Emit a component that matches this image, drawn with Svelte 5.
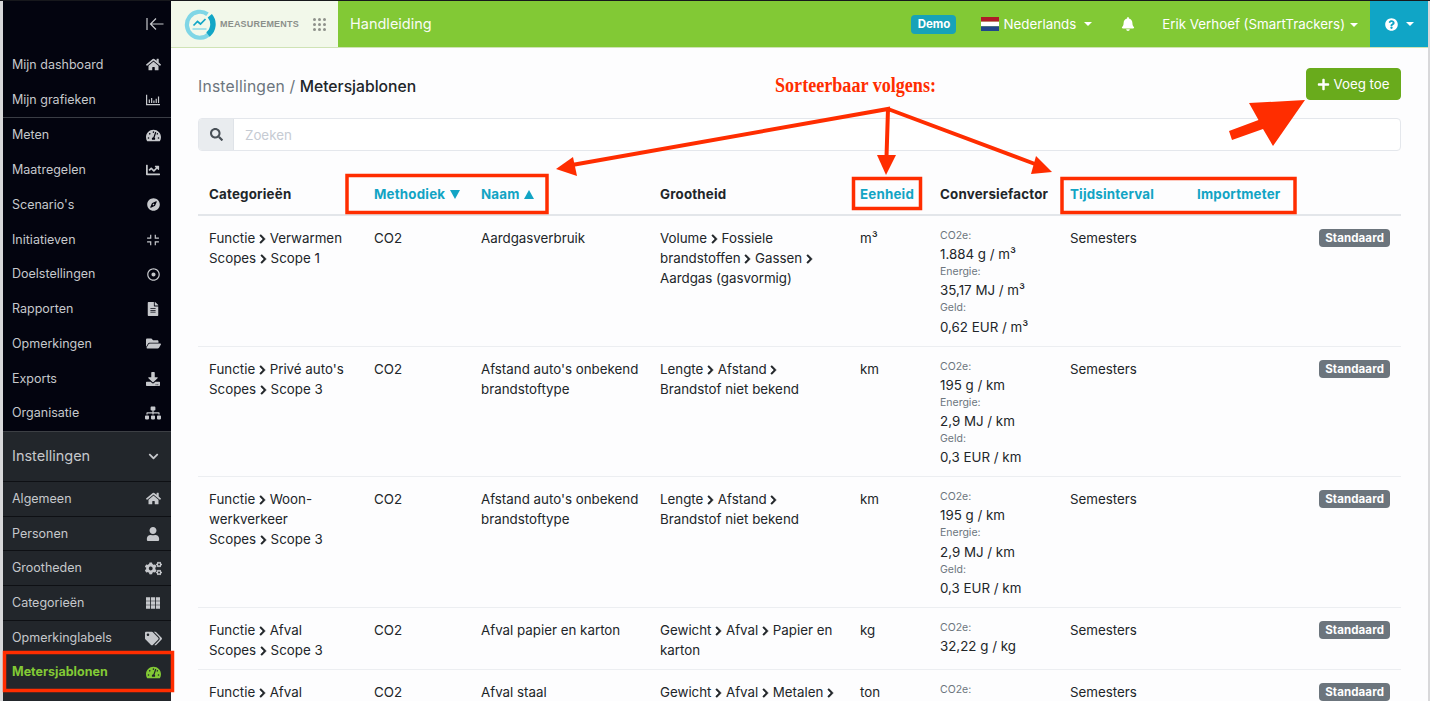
<script>
  const P = {
    home: [576, 'M280.37 148.26L96 300.11V464a16 16 0 0 0 16 16l112.06-.29a16 16 0 0 0 15.92-16V368a16 16 0 0 1 16-16h64a16 16 0 0 1 16 16v95.64a16 16 0 0 0 16 16.05L464 480a16 16 0 0 0 16-16V300L295.67 148.26a12.19 12.19 0 0 0-15.3 0zM571.6 251.47L488 182.56V44.05a12 12 0 0 0-12-12h-56a12 12 0 0 0-12 12v72.61L318.47 43a48 48 0 0 0-61 0L4.34 251.47a12 12 0 0 0-1.6 16.9l25.5 31A12 12 0 0 0 45.15 301l235.22-193.74a12.19 12.19 0 0 1 15.3 0L530.9 301a12 12 0 0 0 16.9-1.6l25.5-31a12 12 0 0 0-1.7-16.93z'],
    bars: [512, 'M0 64h44v340h468v44H0zM100 240h44v130h-44zM184 180h44v190h-44zM268 270h44v100h-44zM352 210h44v160h-44zM436 130h44v240h-44z'],
    tacho: [576, 'M288 32C128.94 32 0 160.94 0 320c0 52.8 14.25 102.26 39.06 144.8 5.61 9.62 16.3 15.2 27.44 15.2h443c11.14 0 21.83-5.58 27.44-15.2C561.75 422.26 576 372.8 576 320c0-159.06-128.94-288-288-288zm0 64c14.71 0 26.58 10.13 30.32 23.65-1.11 2.26-2.64 4.23-3.45 6.67l-9.22 27.67c-5.13 3.49-10.97 6.01-17.64 6.01-17.67 0-32-14.33-32-32S270.33 96 288 96zM96 384c-17.67 0-32-14.33-32-32s14.33-32 32-32 32 14.33 32 32-14.33 32-32 32zm48-160c-17.67 0-32-14.33-32-32s14.33-32 32-32 32 14.33 32 32-14.33 32-32 32zm246.77-72.41l-61.33 184C343.13 347.33 352 364.54 352 384c0 11.72-3.38 22.55-8.88 32H232.88c-5.5-9.45-8.88-20.28-8.88-32 0-33.94 26.5-61.43 59.9-63.59l61.34-184.01c4.17-12.56 17.73-19.45 30.36-15.17 12.57 4.19 19.35 17.79 15.17 30.36zm14.66 57.2l15.52-46.55c3.47-1.29 7.13-2.23 11.05-2.23 17.67 0 32 14.33 32 32s-14.33 32-32 32c-11.38-.01-20.89-6.28-26.57-15.22zM480 384c-17.67 0-32-14.33-32-32s14.33-32 32-32 32 14.33 32 32-14.33 32-32 32z'],
    line: [512, 'M496 384H64V80c0-8.84-7.16-16-16-16H16C7.16 64 0 71.16 0 80v336c0 17.67 14.33 32 32 32h464c8.84 0 16-7.16 16-16v-32c0-8.84-7.16-16-16-16zM464 96H345.94c-21.38 0-32.09 25.85-16.97 40.97l32.4 32.4L288 242.75l-73.37-73.37c-12.5-12.5-32.76-12.5-45.25 0l-68.69 68.69c-6.25 6.25-6.25 16.38 0 22.63l22.62 22.62c6.25 6.25 16.38 6.25 22.63 0L192 237.25l73.37 73.37c12.5 12.5 32.76 12.5 45.25 0l96-96 32.4 32.4c15.12 15.12 40.97 4.41 40.97-16.97V112c.01-8.84-7.15-16-15.99-16z'],
    compass: [496, 'M225.38 233.37c-12.5 12.5-12.5 32.76 0 45.25 12.49 12.5 32.76 12.5 45.25 0 12.5-12.5 12.5-32.76 0-45.25-12.5-12.49-32.76-12.49-45.25 0zM248 8C111.03 8 0 119.03 0 256s111.03 248 248 248 248-111.03 248-248S384.97 8 248 8zm126.14 148.05L308.17 300.4a31.938 31.938 0 0 1-15.77 15.77l-144.34 65.97c-16.65 7.61-33.81-9.55-26.2-26.2l65.98-144.35a31.938 31.938 0 0 1 15.77-15.77l144.34-65.97c16.65-7.6 33.8 9.55 26.19 26.2z'],
    compress: [512, 'M150 60h44v150H40v-44h110zM362 60h-44v150h154v-44H362zM150 452h44V302H40v44h110zM362 452h-44V302h154v44H362z'],
    dot: [512, 'M256 56c110.532 0 200 89.451 200 200 0 110.532-89.451 200-200 200-110.532 0-200-89.451-200-200 0-110.532 89.451-200 200-200m0-48C119.033 8 8 119.033 8 256s111.033 248 248 248 248-111.033 248-248S392.967 8 256 8zm0 168c-44.183 0-80 35.817-80 80s35.817 80 80 80 80-35.817 80-80-35.817-80-80-80z'],
    file: [384, 'M224 136V0H24C10.7 0 0 10.7 0 24v464c0 13.3 10.7 24 24 24h336c13.3 0 24-10.7 24-24V160H248c-13.2 0-24-10.8-24-24zm64 236c0 6.6-5.4 12-12 12H108c-6.6 0-12-5.4-12-12v-8c0-6.6 5.4-12 12-12h168c6.6 0 12 5.4 12 12v8zm0-64c0 6.6-5.4 12-12 12H108c-6.6 0-12-5.4-12-12v-8c0-6.6 5.4-12 12-12h168c6.6 0 12 5.4 12 12v8zm0-72v8c0 6.6-5.4 12-12 12H108c-6.6 0-12-5.4-12-12v-8c0-6.6 5.4-12 12-12h168c6.6 0 12 5.4 12 12zm96-114.1v6.1H256V0h6.1c6.4 0 12.5 2.5 17 7l97.9 98c4.5 4.5 7 10.6 7 16.9z'],
    folder: [576, 'M572.694 292.093L500.27 416.248A63.997 63.997 0 0 1 444.989 448H45.025c-18.523 0-30.064-20.093-20.731-36.093l72.424-124.155A64 64 0 0 1 152 256h399.964c18.523 0 30.064 20.093 20.73 36.093zM152 224h328v-48c0-26.51-21.49-48-48-48H272l-64-64H48C21.49 64 0 85.49 0 112v278.046l69.077-118.418C86.214 242.25 117.989 224 152 224z'],
    download: [512, 'M216 0h80c13.3 0 24 10.7 24 24v168h87.7c17.8 0 26.7 21.5 14.1 34.1L269.7 378.3c-7.5 7.5-19.8 7.5-27.3 0L90.1 226.1c-12.6-12.6-3.7-34.1 14.1-34.1H192V24c0-13.3 10.7-24 24-24zm296 376v112c0 13.3-10.7 24-24 24H24c-13.3 0-24-10.7-24-24V376c0-13.3 10.7-24 24-24h146.7l49 49c20.1 20.1 52.5 20.1 72.6 0l49-49H488c13.3 0 24 10.7 24 24zm-124 88c0-11-9-20-20-20s-20 9-20 20 9 20 20 20 20-9 20-20zm64 0c0-11-9-20-20-20s-20 9-20 20 9 20 20 20 20-9 20-20z'],
    sitemap: [640, 'M128 352H32c-17.67 0-32 14.33-32 32v96c0 17.67 14.33 32 32 32h96c17.67 0 32-14.33 32-32v-96c0-17.67-14.33-32-32-32zm-24-80h192v48h48v-48h192v48h48v-57.59c0-21.17-17.23-38.41-38.41-38.41H344v-64h40c17.67 0 32-14.33 32-32V32c0-17.67-14.33-32-32-32H256c-17.67 0-32 14.33-32 32v96c0 17.67 14.33 32 32 32h40v64H94.41C73.23 224 56 241.23 56 262.41V320h48v-48zm264 80h-96c-17.67 0-32 14.33-32 32v96c0 17.67 14.33 32 32 32h96c17.67 0 32-14.33 32-32v-96c0-17.67-14.33-32-32-32zm240 0h-96c-17.67 0-32 14.33-32 32v96c0 17.67 14.33 32 32 32h96c17.67 0 32-14.33 32-32v-96c0-17.67-14.33-32-32-32z'],
    user: [448, 'M224 256c70.7 0 128-57.3 128-128S294.7 0 224 0 96 57.3 96 128s57.3 128 128 128zm89.6 32h-16.7c-22.2 10.2-46.9 16-72.9 16s-50.6-5.8-72.9-16h-16.7C60.2 288 0 348.2 0 422.4V464c0 26.5 21.5 48 48 48h352c26.5 0 48-21.5 48-48v-41.6c0-74.2-60.2-134.4-134.4-134.4z'],
    cogs: [640, 'M512.1 191l-8.2 14.3c-3 5.3-9.4 7.5-15.1 5.4-11.8-4.4-22.6-10.7-32.1-18.6-4.6-3.8-5.8-10.5-2.8-15.7l8.2-14.3c-6.9-8-12.3-17.3-15.9-27.4h-16.5c-6 0-11.2-4.3-12.2-10.3-2-12-2.1-24.6 0-37.1 1-6 6.2-10.4 12.2-10.4h16.5c3.6-10.1 9-19.4 15.9-27.4l-8.2-14.3c-3-5.2-1.9-11.9 2.8-15.7 9.5-7.9 20.4-14.2 32.1-18.6 5.7-2.1 12.1.1 15.1 5.4l8.2 14.3c10.5-1.9 21.2-1.9 31.7 0L552 6.3c3-5.3 9.4-7.5 15.1-5.4 11.8 4.4 22.6 10.7 32.1 18.6 4.6 3.8 5.8 10.5 2.8 15.7l-8.2 14.3c6.9 8 12.3 17.3 15.9 27.4h16.5c6 0 11.2 4.3 12.2 10.3 2 12 2.1 24.6 0 37.1-1 6-6.2 10.4-12.2 10.4h-16.5c-3.6 10.1-9 19.4-15.9 27.4l8.2 14.3c3 5.2 1.9 11.9-2.8 15.7-9.5 7.9-20.4 14.2-32.1 18.6-5.7 2.1-12.1-.1-15.1-5.4l-8.2-14.3c-10.4 1.9-21.2 1.9-31.7 0zm-10.5-58.8c38.5 29.6 82.4-14.3 52.8-52.8-38.5-29.7-82.4 14.3-52.8 52.8zM386.3 286.1l33.7 16.8c10.1 5.8 14.5 18.1 10.5 29.1-8.9 24.2-26.4 46.4-42.6 65.8-7.4 8.9-20.2 11.1-30.3 5.3l-29.1-16.8c-16 13.7-34.6 24.6-54.9 31.7v33.6c0 11.6-8.3 21.6-19.7 23.6-24.6 4.2-50.4 4.4-75.9 0-11.5-2-20-11.9-20-23.6V418c-20.3-7.2-38.9-18-54.9-31.7L74 403c-10 5.8-22.9 3.6-30.3-5.3-16.2-19.4-33.3-41.6-42.2-65.7-4-10.9.4-23.2 10.5-29.1l33.3-16.8c-3.9-20.9-3.9-42.4 0-63.4L12 205.8c-10.1-5.8-14.6-18.1-10.5-29 8.9-24.2 26-46.4 42.2-65.8 7.4-8.9 20.2-11.1 30.3-5.3l29.1 16.8c16-13.7 34.6-24.6 54.9-31.7V57.1c0-11.5 8.2-21.5 19.6-23.5 24.6-4.2 50.5-4.4 76-.1 11.5 2 20 11.9 20 23.6v33.6c20.3 7.2 38.9 18 54.9 31.7l29.1-16.8c10-5.8 22.9-3.6 30.3 5.3 16.2 19.4 33.2 41.6 42.1 65.8 4 10.9.1 23.2-10 29.1l-33.7 16.8c3.9 21 3.9 42.5 0 63.5zm-117.6 21.1c59.2-77-28.7-164.9-105.7-105.7-59.2 77 28.7 164.9 105.7 105.7zm243.4 182.7l-8.2 14.3c-3 5.3-9.4 7.5-15.1 5.4-11.8-4.4-22.6-10.7-32.1-18.6-4.6-3.8-5.8-10.5-2.8-15.7l8.2-14.3c-6.9-8-12.3-17.3-15.9-27.4h-16.5c-6 0-11.2-4.3-12.2-10.3-2-12-2.1-24.6 0-37.1 1-6 6.2-10.4 12.2-10.4h16.5c3.6-10.1 9-19.4 15.9-27.4l-8.2-14.3c-3-5.2-1.9-11.9 2.8-15.7 9.5-7.9 20.4-14.2 32.1-18.6 5.7-2.1 12.1.1 15.1 5.4l8.2 14.3c10.5-1.9 21.2-1.9 31.7 0l8.2-14.3c3-5.3 9.4-7.5 15.1-5.4 11.8 4.4 22.6 10.7 32.1 18.6 4.6 3.8 5.8 10.5 2.8 15.7l-8.2 14.3c6.9 8 12.3 17.3 15.9 27.4h16.5c6 0 11.2 4.3 12.2 10.3 2 12 2.1 24.6 0 37.1-1 6-6.2 10.4-12.2 10.4h-16.5c-3.6 10.1-9 19.4-15.9 27.4l8.2 14.3c3 5.2 1.9 11.9-2.8 15.7-9.5 7.9-20.4 14.2-32.1 18.6-5.7 2.1-12.1-.1-15.1-5.4l-8.2-14.3c-10.4 1.9-21.2 1.9-31.7 0zM501.6 431c38.5 29.6 82.4-14.3 52.8-52.8-38.5-29.6-82.4 14.3-52.8 52.8z'],
    th: [512, 'M0 50h150v120H0zM181 50h150v120H181zM362 50h150v120H362zM0 196h150v120H0zM181 196h150v120H181zM362 196h150v120H362zM0 342h150v120H0zM181 342h150v120H181zM362 342h150v120H362z'],
    tags: [640, 'M497.941 225.941L286.059 14.059A48 48 0 0 0 252.118 0H48C21.49 0 0 21.49 0 48v204.118a48 48 0 0 0 14.059 33.941l211.882 211.882c18.744 18.745 49.136 18.746 67.882 0l204.118-204.118c18.745-18.745 18.745-49.137 0-67.882zM112 160c-26.51 0-48-21.49-48-48s21.49-48 48-48 48 21.49 48 48-21.49 48-48 48zm513.941 133.823L421.823 497.941c-18.745 18.745-49.137 18.745-67.882 0l-.36-.36L527.64 323.522c16.999-16.999 26.36-39.6 26.36-63.64s-9.362-46.641-26.36-63.64L331.397 0h48.721a48 48 0 0 1 33.941 14.059l211.882 211.882c18.745 18.745 18.745 49.137 0 67.882z'],
    chev: [448, 'M207.029 381.476L12.686 187.132c-9.373-9.373-9.373-24.569 0-33.941l22.667-22.667c9.357-9.357 24.522-9.375 33.901-.04L224 284.505l154.745-154.021c9.379-9.335 24.544-9.317 33.901.04l22.667 22.667c9.373 9.373 9.373 24.569 0 33.941L240.971 381.476c-9.373 9.372-24.569 9.372-33.942 0z'],
    right: [320, 'M285.476 272.971L91.132 467.314c-9.373 9.373-24.569 9.373-33.941 0l-22.667-22.667c-9.357-9.357-9.375-24.522-.04-33.901L188.505 256 34.484 101.255c-9.335-9.379-9.317-24.544.04-33.901l22.667-22.667c9.373-9.373 24.569-9.373 33.941 0L285.475 239.03c9.373 9.372 9.373 24.568.001 33.941z'],
    search: [512, 'M505 442.7L405.3 343c-4.5-4.5-10.6-7-17-7H372c27.6-35.3 44-79.7 44-128C416 93.1 322.9 0 208 0S0 93.1 0 208s93.1 208 208 208c48.3 0 92.7-16.4 128-44v16.3c0 6.4 2.5 12.5 7 17l99.7 99.7c9.4 9.4 24.6 9.4 33.9 0l28.3-28.3c9.4-9.4 9.4-24.6.1-34zM208 336c-70.7 0-128-57.2-128-128 0-70.7 57.2-128 128-128 70.7 0 128 57.2 128 128 0 70.7-57.2 128-128 128z'],
    bell: [448, 'M224 512c35.32 0 63.97-28.65 63.97-64H160.03c0 35.35 28.65 64 63.97 64zm215.39-149.71c-19.32-20.76-55.47-51.99-55.47-154.29 0-77.7-54.48-139.9-127.94-155.16V32c0-17.67-14.32-32-31.98-32s-31.98 14.33-31.98 32v20.84C118.56 68.1 64.08 130.3 64.08 208c0 102.3-36.15 133.53-55.47 154.29-6 6.45-8.66 14.16-8.61 21.71.11 16.4 12.98 32 32.1 32h383.8c19.12 0 32-15.6 32.1-32 .05-7.55-2.61-15.27-8.61-21.71z'],
    plus: [448, 'M416 208H272V64c0-17.67-14.33-32-32-32h-32c-17.67 0-32 14.33-32 32v144H32c-17.67 0-32 14.33-32 32v32c0 17.67 14.33 32 32 32h144v144c0 17.67 14.33 32 32 32h32c17.67 0 32-14.33 32-32V304h144c17.67 0 32-14.33 32-32v-32c0-17.67-14.33-32-32-32z'],
    help: [512, 'M504 256c0 136.997-111.043 248-248 248S8 392.997 8 256C8 119.083 119.043 8 256 8s248 111.083 248 248zM262.655 90c-54.497 0-89.255 22.957-116.549 63.758-3.536 5.286-2.353 12.415 2.715 16.258l34.699 26.31c5.205 3.947 12.621 3.008 16.665-2.122 17.864-22.658 30.113-35.797 57.303-35.797 20.429 0 45.698 13.148 45.698 32.958 0 14.976-12.363 22.667-32.534 33.976C247.128 238.528 216 254.941 216 296v4c0 6.627 5.373 12 12 12h56c6.627 0 12-5.373 12-12v-1.333c0-28.462 83.186-29.647 83.186-106.667 0-58.002-60.165-102-116.531-102zM256 338c-25.365 0-46 20.635-46 46 0 25.364 20.635 46 46 46s46-20.636 46-46c0-25.365-20.635-46-46-46z']
  };

  const menuTop = [['Mijn dashboard', 'home', 15], ['Mijn grafieken', 'bars', 14]];
  const menuMid = [
    ['Meten', 'tacho', 15], ['Maatregelen', 'line', 14], ["Scenario's", 'compass', 13],
    ['Initiatieven', 'compress', 14], ['Doelstellingen', 'dot', 13], ['Rapporten', 'file', 14],
    ['Opmerkingen', 'folder', 15], ['Exports', 'download', 14], ['Organisatie', 'sitemap', 16]
  ];
  const menuSub = [
    ['Algemeen', 'home', 15], ['Personen', 'user', 14], ['Grootheden', 'cogs', 17],
    ['Categorieën', 'th', 14], ['Opmerkinglabels', 'tags', 17]
  ];

  const conv = (a, b, c) => [['CO2e:', a], ['Energie:', b], ['Geld:', c]].filter((x) => x[1]);
  const rows = [
    { cat: [['Functie', 'Verwarmen'], ['Scopes', 'Scope 1']], naam: 'Aardgasverbruik', gr: ['Volume', 'Fossiele brandstoffen', 'Gassen', 'Aardgas (gasvormig)'], unit: 'm³', conv: conv('1.884 g / m³', '35,17 MJ / m³', '0,62 EUR / m³') },
    { cat: [['Functie', "Privé auto's"], ['Scopes', 'Scope 3']], naam: "Afstand auto's onbekend brandstoftype", gr: ['Lengte', 'Afstand', 'Brandstof niet bekend'], unit: 'km', conv: conv('195 g / km', '2,9 MJ / km', '0,3 EUR / km') },
    { cat: [['Functie', 'Woon-werkverkeer'], ['Scopes', 'Scope 3']], naam: "Afstand auto's onbekend brandstoftype", gr: ['Lengte', 'Afstand', 'Brandstof niet bekend'], unit: 'km', conv: conv('195 g / km', '2,9 MJ / km', '0,3 EUR / km') },
    { cat: [['Functie', 'Afval'], ['Scopes', 'Scope 3']], naam: 'Afval papier en karton', gr: ['Gewicht', 'Afval', 'Papier en karton'], unit: 'kg', conv: conv('32,22 g / kg') },
    { cat: [['Functie', 'Afval'], ['Scopes', 'Scope 3']], naam: 'Afval staal', gr: ['Gewicht', 'Afval', 'Metalen', 'Staal'], unit: 'ton', conv: conv('1.000 g / ton') }
  ];
  const widths = [165, 107, 179, 200, 80, 130, 127, 70, 145];
</script>

{#snippet icon(name, size, cls = '')}
  <svg class={cls} width={size} height={size} viewBox="0 0 {P[name][0]} 512" aria-hidden="true"><path d={P[name][1]} /></svg>
{/snippet}

{#snippet item(it, active = false)}
  <a class="item" class:active href="#top">
    <span>{it[0]}</span>
    <i class="ico">{@render icon(it[1], it[2])}</i>
  </a>
{/snippet}

<div class="frame">
  <aside class="side">
    <div class="toggle">
      <svg class="outline" width="18" height="14" viewBox="0 0 18 14"><path d="M1 1v12M17.500 7H4.500M10 1.500L4.500 7l5.500 5.500" /></svg>
    </div>
    <div class="grp">
      {#each menuTop as it}{@render item(it)}{/each}
    </div>
    <div class="grp mid">
      {#each menuMid as it}{@render item(it)}{/each}
    </div>
    <section class="sub">
      <div class="subhead"><span>Instellingen</span><i class="ico">{@render icon('chev', 11)}</i></div>
      {#each menuSub as it}{@render item(it)}{/each}
      {@render item(['Metersjablonen', 'tacho', 15], true)}
      <div class="item blank"></div>
    </section>
  </aside>

  <div class="right">
    <header class="top">
      <div class="brand">
        <svg class="logo" width="32" height="32" viewBox="0 0 32 32">
          <path d="M23.500 6.200A13 13 0 1 0 25.500 25.500" stroke="#7fd6e6" stroke-width="4.200" />
          <path d="M25.800 7.800A13 13 0 0 1 24 26.500" stroke="#12a6c6" stroke-width="5.500" />
          <path d="M9.500 17.500l4-4 3 2.500 5-5" stroke="#12a6c6" stroke-width="1.700" />
          <path d="M8.500 21h14" stroke="#7fd6e6" stroke-width="1.300" />
        </svg>
        <span class="wordmark">MEASUREMENTS</span>
        <svg class="dots" width="13" height="13" viewBox="0 0 13 13">
          {#each [1.5, 6.5, 11.5] as y}{#each [1.5, 6.5, 11.5] as x}<circle cx={x} cy={y} r="1.500" />{/each}{/each}
        </svg>
      </div>
      <div class="bar">
        <span class="manual">Handleiding</span>
        <span class="demo">Demo</span>
        <span class="lang">
          <svg class="flag" width="18" height="14" viewBox="0 0 18 14"><rect width="18" height="4.700" fill="#ae1c28" /><rect y="4.700" width="18" height="4.600" fill="#fff" /><rect y="9.300" width="18" height="4.700" fill="#21468b" /></svg>
          Nederlands<b class="caret"></b>
        </span>
        <span class="bell">{@render icon('bell', 14)}</span>
        <span class="who">Erik Verhoef (SmartTrackers)<b class="caret near"></b></span>
      </div>
      <div class="helpbox">{@render icon('help', 13)}<b class="caret"></b></div>
    </header>

    <main class="main">
      <div class="pagehead">
        <h1><span class="crumb">Instellingen /</span> Metersjablonen</h1>
        <button class="add">{@render icon('plus', 13)}Voeg toe</button>
      </div>
      <div class="searchbox">
        <span class="addon">{@render icon('search', 13)}</span>
        <input placeholder="Zoeken" />
      </div>

      <table>
        <colgroup>{#each widths as w}<col width={w} />{/each}</colgroup>
        <thead>
          <tr>
            <th>Categorieën</th>
            <th class="sort">Methodiek <svg class="tri" width="10" height="9" viewBox="0 0 10 9"><path d="M0 0h10L5 9z" /></svg></th>
            <th class="sort">Naam <svg class="tri" width="10" height="9" viewBox="0 0 10 9"><path d="M0 9h10L5 0z" /></svg></th>
            <th>Grootheid</th>
            <th class="sort">Eenheid</th>
            <th>Conversiefactor</th>
            <th class="sort">Tijdsinterval</th>
            <th class="sort wide">Importmeter</th>
            <th></th>
          </tr>
        </thead>
        <tbody>
          {#each rows as r}
            <tr>
              <td>
                {#each r.cat as pair}
                  <div>{pair[0]} {@render icon('right', 10, 'sep')} {pair[1]}</div>
                {/each}
              </td>
              <td>CO2</td>
              <td class="naam">{r.naam}</td>
              <td>
                {#each r.gr as g, i}{g}{#if i < r.gr.length - 1}{' '}{@render icon('right', 10, 'sep')}{' '}{/if}{/each}
              </td>
              <td>{r.unit}</td>
              <td>
                {#each r.conv as c}
                  <div class="lbl">{c[0]}</div>
                  <div>{c[1]}</div>
                {/each}
              </td>
              <td>Semesters</td>
              <td></td>
              <td><span class="badge">Standaard</span></td>
            </tr>
          {/each}
        </tbody>
      </table>
    </main>
  </div>

  <!-- annotations drawn over the screenshot -->
  <svg class="notes" width="1430" height="701" viewBox="0 0 1430 701">
    <g fill="none" stroke="#ff2d00" stroke-width="4">
      <rect x="347" y="175.500" width="200" height="37" stroke-width="3.500" />
      <rect x="853.500" y="178.500" width="67" height="30" stroke-width="3.500" />
      <rect x="1062" y="178.500" width="233" height="34" stroke-width="3.500" />
      <rect x="4.500" y="652.500" width="168" height="38" stroke-width="3.500" />
      <path d="M572 165L888 109l-1.500 48M888 109l147 55" />
    </g>
    <g fill="#ff2d00">
      <path d="M556 169l17-12 4 19z" />
      <path d="M877 155h19l-10 20z" />
      <path d="M1052 172l-16-16-5 18z" />
      <path d="M1305 100l-56 3 9.500 17-29.500 11 3 9 31-11 10 17z" />
    </g>
    <text x="775" y="92" class="notetext" textLength="161" lengthAdjust="spacingAndGlyphs">Sorteerbaar volgens:</text>
  </svg>
</div>

<style>
  :global(body) { margin: 0; overflow: hidden; background: #fff; }
  .frame {
    position: relative;
    display: flex;
    width: 1430px;
    height: 701px;
    overflow: hidden;
    box-sizing: border-box;
    padding: 1px 2px 0 3px;
    background: #d8d8da;
    font: 13.33px/20px Inter, "Liberation Sans", sans-serif;
    color: #212529;
    box-shadow: inset 0 1px 0 #17181c;
  }
  svg { fill: currentColor; display: inline-block; }

  .side { width: 168px; flex: none; background: #03040f; color: #c6c8cc; display: flex; flex-direction: column; font-size: 12.5px; }
  .toggle { height: 46.500px; flex: none; display: flex; justify-content: flex-end; align-items: center; padding-right: 7px; color: #c6c8cc; box-sizing: border-box; }
  .outline { fill: none; stroke: currentColor; stroke-width: 1.2; }
  .item {
    height: 34.75px;
    box-sizing: border-box;
    display: flex;
    justify-content: space-between;
    align-items: center;
    padding: 0 8px 0 9px;
    color: inherit;
    text-decoration: none;
    flex: none;
  }
  .ico { width: 20px; display: flex; justify-content: center; align-items: center; font-style: normal; }
  .grp { flex: none; }
  .mid { border-top: 1px solid #3a3d45; }
  .sub { background: #22262b; border-top: 1px solid #3c3f44; flex: 1; }
  .subhead { height: 49px; display: flex; justify-content: space-between; align-items: center; padding: 0 8px 0 9px; font-size: 14.5px; box-sizing: border-box; }
  .sub .item { border-top: 1px solid #0e1014; height: 34.85px; }
  .sub .active { color: #82c935; font-weight: 700; border-top: 0; }
  .sub .blank { border-top: 1px solid #1a1c20; }

  .right { flex: 1; min-width: 0; background: #fdfdfe; display: flex; flex-direction: column; }
  .top { display: flex; height: 46px; flex: none; border-bottom: 1px solid #cfe3b5; box-sizing: content-box; color: #fff; }
  .brand { width: 167px; flex: none; background: #f2f8ea; display: flex; align-items: center; padding-left: 13px; box-sizing: border-box; }
  .logo { flex: none; fill: none; }
  .wordmark { font: 700 9px/1 "Liberation Sans", sans-serif; color: #8b8f8a; margin-left: 4px; letter-spacing: .2px; white-space: nowrap; }
  .dots { margin-left: 14px; flex: none; fill: #8e918b; }
  .bar { flex: 1; background: #82c935; display: flex; align-items: center; padding: 0 12px 0 12px; }
  .manual { font-size: 14.5px; margin-right: auto; opacity: .95; }
  .demo { background: #17a2b8; border-radius: 4px; font-size: 11.5px; font-weight: 700; width: 45px; height: 19px; line-height: 19px; text-align: center; margin-right: 25px; }
  .lang { display: flex; align-items: center; }
  .flag { margin-right: 4px; }
  .caret { display: inline-block; margin-left: 8px; border-top: 4px solid currentColor; border-left: 4px solid transparent; border-right: 4px solid transparent; }
  .caret.near { margin-left: 5px; vertical-align: 2px; }
  .bell { margin-left: 29px; display: flex; }
  .who { margin-left: 27px; white-space: nowrap; }
  .helpbox { width: 58px; flex: none; background: #10a5c6; display: flex; align-items: center; padding-left: 15px; box-sizing: border-box; }

  .main { flex: 1; padding: 20px 27px 0 27px; min-height: 0; }
  .pagehead { display: flex; justify-content: space-between; align-items: center; height: 32px; }
  h1 { margin: 6px 0 0; font-size: 15.7px; font-weight: 500; line-height: 36px; }
  .crumb { color: #6c757d; font-weight: 400; letter-spacing: .2px; }
  .add { background: #69ab1c; color: #fff; border: 1px solid #69ab1c; border-radius: 4px; height: 32px; width: 95px; font: 13.33px Inter, sans-serif; display: flex; align-items: center; justify-content: center; gap: 3px; padding: 0; }
  .searchbox { display: flex; height: 33px; margin-top: 18px; border: 1px solid #e4e7ec; border-radius: 4px; box-sizing: border-box; background: #fff; }
  .addon { width: 34px; flex: none; background: #e9ecef; display: flex; align-items: center; justify-content: center; color: #495057; border-right: 1px solid #dfe3e8; border-radius: 3px 0 0 3px; }
  input { flex: 1; border: 0; outline: 0; background: transparent; padding: 0 11px; font: 13.33px Inter, sans-serif; }
  input::placeholder { color: #c6cbd3; opacity: 1; }

  table { width: 1203px; table-layout: fixed; border-collapse: separate; border-spacing: 0; margin-top: 21px; }
  th { height: 44px; box-sizing: border-box; padding: 2px 11px 0; text-align: left; font-weight: 700; letter-spacing: .2px; border-bottom: 2px solid #e3e6ea; white-space: nowrap; }
  .sort { color: #12a4c4; }
  .wide { overflow: visible; }
  .tri { fill: #12a4c4; margin-left: 1px; }
  td { padding: 12px 11px 9px; vertical-align: top; border-bottom: 1px solid #eceef1; }
  td.naam { padding-right: 6px; }
  .lbl { font-size: 10.5px; line-height: 16.2px; color: #6c757d; }
  .sep { vertical-align: -1px; margin: 0 -1px; width: 9px; stroke: currentColor; stroke-width: 30; }
  .badge { display: block; width: fit-content; margin: 1px 0 0 auto; background: #6c757d; color: #fff; font-size: 11.5px; font-weight: 700; line-height: 18px; padding: 0 6px; border-radius: 4px; letter-spacing: .1px; }

  .notes { position: absolute; left: 0; top: 0; pointer-events: none; }
  .notetext { font: 700 20px "Liberation Serif", serif; fill: #ff2d00; }
</style>
